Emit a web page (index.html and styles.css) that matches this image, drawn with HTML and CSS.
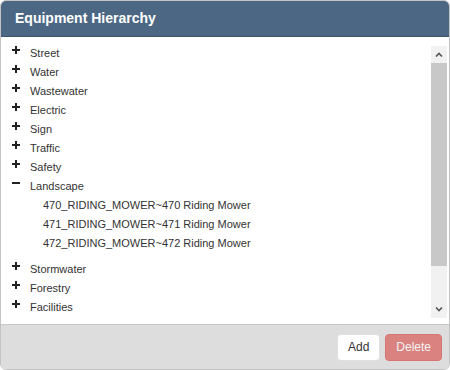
FILE: index.html
```html
<!DOCTYPE html>
<html lang="en">
<head>
  <meta charset="UTF-8" />
  <title>Equipment Hierarchy</title>
  <link rel="stylesheet" href="styles.css">
</head>
<body>
  <div class="panel">
    <div class="panel-header">Equipment Hierarchy</div>

    <div class="panel-body">
      <ul class="tree">
        <li><span class="toggle plus"></span>Street</li>
        <li><span class="toggle plus"></span>Water</li>
        <li><span class="toggle plus"></span>Wastewater</li>
        <li><span class="toggle plus"></span>Electric</li>
        <li><span class="toggle plus"></span>Sign</li>
        <li><span class="toggle plus"></span>Traffic</li>
        <li><span class="toggle plus"></span>Safety</li>
        <li class="open"><span class="toggle minus"></span>Landscape
          <ul class="children">
            <li>470_RIDING_MOWER~470 Riding Mower</li>
            <li>471_RIDING_MOWER~471 Riding Mower</li>
            <li>472_RIDING_MOWER~472 Riding Mower</li>
          </ul>
        </li>
        <li><span class="toggle plus"></span>Stormwater</li>
        <li><span class="toggle plus"></span>Forestry</li>
        <li><span class="toggle plus"></span>Facilities</li>
      </ul>

      <!-- scrollbar -->
      <div class="scrollbar">
        <div class="sb-btn">
          <svg width="8" height="5" viewBox="0 0 8 5"><path d="M1 4.5 L4 1.5 L7 4.5" fill="none" stroke="#555" stroke-width="1.6"/></svg>
        </div>
        <div class="sb-thumb"></div>
        <div class="sb-track"></div>
        <div class="sb-btn">
          <svg width="8" height="5" viewBox="0 0 8 5"><path d="M1 0.5 L4 3.5 L7 0.5" fill="none" stroke="#555" stroke-width="1.6"/></svg>
        </div>
      </div>
    </div>

    <div class="panel-footer">
      <button class="btn btn-default">Add</button>
      <button class="btn btn-danger" disabled>Delete</button>
    </div>
  </div>
</body>
</html>
```

FILE: styles.css
```css
* { box-sizing: border-box; margin: 0; padding: 0; }

body {
  font-family: "Liberation Sans", Arial, sans-serif;
  font-size: 11px;
  color: #333;
  background: #fff;
}

.panel {
  width: 450px;
  height: 370px;
  border: 1px solid #c4c4c4;
  border-radius: 6px;
  overflow: hidden;
  display: flex;
  flex-direction: column;
}

.panel-header {
  height: 36px;
  padding: 0 14px;
  background: #4c6784;
  border-bottom: 1px solid #3f5670;
  color: #fff;
  font-size: 14px;
  font-weight: bold;
  line-height: 35px;
}

.panel-body {
  flex: 1;
  display: flex;
  padding: 7px 2px 5px 0;
  background: #fff;
}

.tree {
  flex: 1;
  list-style: none;
  height: 274px;
  overflow: hidden;
  padding-left: 11px;
}

.tree li {
  line-height: 19px;
}

.toggle {
  display: inline-block;
  width: 8px;
  height: 8px;
  margin-right: 10px;
  position: relative;
  top: -3px;
}

.toggle::before,
.toggle::after {
  content: "";
  position: absolute;
  background: #222;
}

.toggle::before {
  left: 0;
  top: 3px;
  width: 8px;
  height: 2px;
}

.plus::after {
  left: 3px;
  top: 0;
  width: 2px;
  height: 8px;
}

.minus::after { display: none; }

.children {
  list-style: none;
  padding-left: 31px;
  margin-bottom: 7px;
}

.scrollbar {
  width: 16px;
  height: 272px;
  margin-top: 2px;
  display: flex;
  flex-direction: column;
  background: #f1f1f1;
}

.sb-btn {
  height: 17px;
  display: flex;
  align-items: center;
  justify-content: center;
}

.sb-thumb {
  height: 203px;
  background: #c8c8c8;
}

.sb-track { flex: 1; }

.panel-footer {
  height: 45px;
  display: flex;
  justify-content: flex-end;
  align-items: center;
  gap: 5px;
  padding: 0 7px;
  background: #ddd;
  border-top: 1px solid #c8c8c8;
}

.btn {
  font-family: inherit;
  font-size: 12px;
  height: 27px;
  padding: 0 10px;
  border-radius: 4px;
  border: 1px solid transparent;
}

.btn-default {
  background: #fff;
  color: #333;
  border-color: #e0e0e0;
}

.btn-danger {
  background: #d9534f;
  border-color: #d43f3a;
  color: #fff;
  opacity: 0.65;
}
```
